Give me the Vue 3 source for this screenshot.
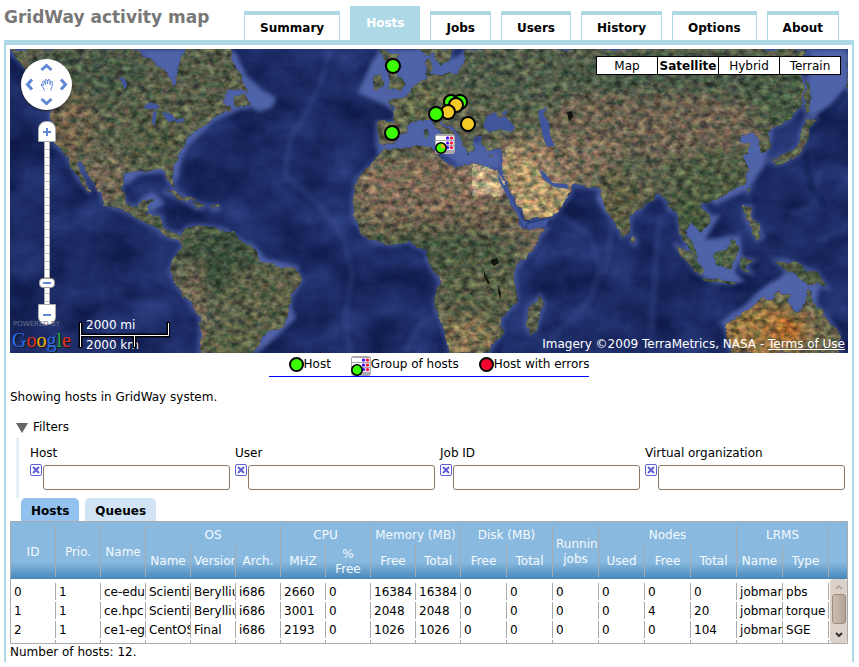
<template>
  <div class="page">
    <header class="header">
      <h1 class="title">GridWay activity map</h1>
      <nav class="tabs">
        <a v-for="tab in tabs" :key="tab" href="#" class="tab" :class="{ active: tab === activeTab }" @click.prevent="activeTab = tab">{{ tab }}</a>
      </nav>
    </header>

    <main class="content">
      <section class="map">
        <svg class="world" viewBox="10 49 838 304" preserveAspectRatio="xMidYMid slice" aria-hidden="true">
          <defs>
            <clipPath id="land">
              <path v-for="(d, i) in land" :key="i" :d="d" />
            </clipPath>
            <filter id="rough" x="0" y="0" width="100%" height="100%" color-interpolation-filters="sRGB">
              <feTurbulence type="fractalNoise" baseFrequency="0.07" numOctaves="5" seed="3" result="coast" />
              <feDisplacementMap in="SourceGraphic" in2="coast" scale="9" xChannelSelector="R" yChannelSelector="G" result="shape" />
              <feTurbulence type="fractalNoise" baseFrequency="0.13 0.17" numOctaves="6" seed="21" />
              <feColorMatrix values="1.4 0.3 0 0 -0.4  1 0.7 0 0 -0.4  0.9 0.5 0.3 0 -0.4  0 0 0 0 1" result="grain" />
              <feComposite in="shape" in2="grain" operator="arithmetic" k1="0.95" k2="0.44" k3="0.04" k4="0" result="mix" />
              <feComposite in="mix" in2="shape" operator="in" />
            </filter>
            <filter id="waves" x="0" y="0" width="100%" height="100%" color-interpolation-filters="sRGB">
              <feTurbulence type="fractalNoise" baseFrequency="0.022 0.03" numOctaves="6" seed="12" />
              <feColorMatrix values="0.5 0 0 0 -0.13  0.6 0 0 0 -0.12  0.9 0 0 0 -0.04  0 0 0 0 1" />
            </filter>
            <filter id="soft"><feGaussianBlur stdDeviation="7" /></filter>
            <filter id="softer"><feGaussianBlur stdDeviation="2" /></filter>
            <symbol id="host-group" viewBox="0 0 20 20">
              <rect width="20" height="20" rx="3" fill="#aaa8aa" />
              <path d="M1 2h18v4H1zM1 7h18v4H1zM1 12h18v3H1z" fill="#fff" />
              <path d="M11 2h8v4h-8zM11 7h8v4h-8zM11 12h8v4h-8z" fill="#e8dce8" />
              <g fill="#4a0cff"><circle cx="12.5" cy="4" r="1.6" /><circle cx="12.5" cy="9" r="1.6" /><circle cx="12.5" cy="13.5" r="1.6" /></g>
              <g fill="#f5123c"><circle cx="16.5" cy="4" r="1.6" /><circle cx="16.5" cy="9" r="1.6" /><circle cx="16.5" cy="13.5" r="1.6" /></g>
              <circle cx="6" cy="14" r="5.2" fill="#3bff00" stroke="#000" stroke-width="1.6" />
            </symbol>
          </defs>

          <rect x="10" y="49" width="838" height="304" fill="#1b2a63" />
          <rect x="10" y="49" width="838" height="304" filter="url(#waves)" opacity="0.35" />
          <g filter="url(#softer)">
            <path v-for="(d, i) in shelf" :key="i" :d="d" fill="#5063a9" />
            <path v-for="(d, i) in land" :key="'s' + i" :d="d" fill="#4c5fa3" stroke="#4c5fa3" stroke-width="4" opacity="0.75" />
          </g>
          <g fill="none" stroke="#4b60a4" stroke-width="5" opacity="0.25" filter="url(#softer)">
            <path d="M330 49L322 80L305 115L290 140L285 175L320 205L345 240L352 275L345 320L350 353" />
            <path d="M560 215L590 235L600 270L590 300L560 330L540 353M660 215L655 270L650 353M607 200L612 230L604 275" />
            <path d="M405 353L420 325L440 310M818 240L848 228M790 215L815 205L820 170" />
          </g>
          <path d="M848 90L830 112L810 128L805 150L810 185L825 205M680 256L697 278L720 286L755 289L780 275" fill="none" stroke="#0b153f" stroke-width="2" filter="url(#softer)" />
          <g filter="url(#rough)">
            <g clip-path="url(#land)">
              <rect x="10" y="49" width="838" height="304" fill="#626850" />
              <g filter="url(#soft)">
                <ellipse v-for="(t, i) in terrain" :key="i" :cx="t[0]" :cy="t[1]" :rx="t[2]" :ry="t[3]" :fill="t[4]" />
              </g>
              <path d="M473 165L500 168L505 196L472 195Z" fill="#cdb58e" />
              <path d="M506 150L530 158L552 180L568 187L570 200L553 216L530 220L517 202L504 172Z" fill="#bda373" />
            </g>
          </g>
          <path v-for="(d, i) in lakes" :key="'l' + i" :d="d" fill="#40559b" />
          <g fill="#11150f">
            <path d="M491 260l6-2 2 5-5 3-3-3zM484 270l2 6 4 7-2 1-4-8zM498 285l3 8-1 6-2-8zM567 112l5-1 1 6-4 4z" />
          </g>

          <g stroke="#000" stroke-width="2">
            <circle v-for="(pin, i) in pins" :key="i" :cx="pin.x" :cy="pin.y" r="7" :fill="pin.ok ? '#3bff00' : '#f3cb26'" />
          </g>
          <use href="#host-group" x="435" y="134" width="20" height="20" />
          <path d="M441 148V144A4 4 0 0 1 445 148Z" fill="#f5b52a" />
        </svg>

        <div class="controls">
          <div class="pan">
            <button class="up" aria-label="Pan up"><svg viewBox="0 0 13 9"><path d="M1.5 7L6.5 2.5L11.5 7" /></svg></button>
            <button class="left" aria-label="Pan left"><svg viewBox="0 0 13 9"><path d="M1.5 7L6.5 2.5L11.5 7" /></svg></button>
            <button class="center" aria-label="Reset view">
              <svg class="hand" viewBox="0 0 14 14"><path d="M4.500 12.500L3 9.500Q1 7.500 1 6.500Q2 6 3.500 7.500L2.500 3.500Q3.500 2.500 4.500 3.500L5.500 6.500L5 2Q6 1 7 2L7.500 6L8 2Q9 1 10 2L10 6.500L11 3.500Q12.500 3 12.500 4.500L12 8.500L10.500 12.500" /></svg>
            </button>
            <button class="right" aria-label="Pan right"><svg viewBox="0 0 13 9"><path d="M1.5 7L6.5 2.5L11.5 7" /></svg></button>
            <button class="down" aria-label="Pan down"><svg viewBox="0 0 13 9"><path d="M1.5 7L6.5 2.5L11.5 7" /></svg></button>
          </div>
          <button class="zoom zoom-in" aria-label="Zoom in"><svg viewBox="0 0 8 8"><path d="M0 4H8M4 0V8" /></svg></button>
          <input v-model="zoom" class="slider" type="range" min="0" max="19" aria-label="Zoom level" />
          <button class="zoom zoom-out" aria-label="Zoom out"><svg viewBox="0 0 8 8"><path d="M0 4H8" /></svg></button>
        </div>

        <div class="map-types">
          <button v-for="type in mapTypes" :key="type" :class="{ selected: type === mapType }" @click="mapType = type">{{ type }}</button>
        </div>

        <div class="brand">
          <div class="powered">POWERED BY</div>
          <div class="google">
            <span class="blue">G</span><span class="red">o</span><span class="yellow">o</span><span class="blue">g</span><span class="green">l</span><span class="red">e</span>
          </div>
        </div>

        <div class="scale">
          <span>2000 mi</span>
          <span>2000 km</span>
          <svg viewBox="0 0 92 27" aria-hidden="true">
            <path d="M2.500 0V26M2.500 13.500H90.500V0M56.500 13.500V26" fill="none" stroke="#000" stroke-width="4" />
            <path d="M2.500 1V25M2.500 13.500H90.500V1M56.500 13.500V25" fill="none" stroke="#fff" stroke-width="1" />
          </svg>
        </div>

        <div class="copyright">Imagery ©2009 TerraMetrics, NASA - <a href="#">Terms of Use</a></div>
      </section>

      <div class="legend">
        <span class="legend-item"><i class="dot green-dot"></i>Host</span>
        <span class="legend-item"><svg class="group-icon" aria-hidden="true"><use href="#host-group" /></svg>Group of hosts</span>
        <span class="legend-item"><i class="dot red-dot"></i>Host with errors</span>
      </div>

      <p class="showing">Showing hosts in GridWay system.</p>

      <button class="filters-toggle" @click="showFilters = !showFilters"><i class="triangle"></i>Filters</button>
      <form v-show="showFilters" class="filters" @submit.prevent>
        <div v-for="filter in filters" :key="filter.id" class="filter">
          <label :for="filter.id">{{ filter.label }}</label>
          <div class="filter-row">
            <button type="button" class="clear" :aria-label="'Clear ' + filter.label" @click="filter.value = ''">
              <svg viewBox="0 0 12 12"><rect x="0.5" y="0.5" width="11" height="11" rx="1.5" /><path d="M3 3L9 9M9 3L3 9" /></svg>
            </button>
            <input :id="filter.id" v-model="filter.value" type="text" />
          </div>
        </div>
      </form>

      <div class="subtabs">
        <button v-for="tab in ['Hosts', 'Queues']" :key="tab" :class="{ current: tab === subtab }" @click="subtab = tab">{{ tab }}</button>
      </div>

      <div class="grid">
        <table>
          <colgroup>
            <col v-for="n in 10" :key="n" class="narrow" />
            <col v-for="n in 8" :key="n + 10" class="wide" />
            <col class="rest" />
          </colgroup>
          <thead>
            <tr class="groups">
              <th rowspan="2">ID</th>
              <th rowspan="2">Prio.</th>
              <th rowspan="2">Name</th>
              <th colspan="3">OS</th>
              <th colspan="2">CPU</th>
              <th colspan="2">Memory (MB)</th>
              <th colspan="2">Disk (MB)</th>
              <th rowspan="2">Running jobs</th>
              <th colspan="3">Nodes</th>
              <th colspan="2">LRMS</th>
              <td rowspan="2" class="blank"></td>
            </tr>
            <tr class="columns">
              <th v-for="(name, i) in columns" :key="i">{{ name }}</th>
            </tr>
          </thead>
          <tbody>
            <tr class="spacer"><td colspan="19"></td></tr>
            <tr v-for="(host, i) in hosts" :key="i">
              <td v-for="(cell, j) in host" :key="j">{{ cell }}</td>
            </tr>
            <tr>
              <td v-for="n in 18" :key="n"></td>
            </tr>
          </tbody>
        </table>
        <div class="scrollbar">
          <svg class="faded" viewBox="0 0 8 5"><path d="M1 4L4 1L7 4" /></svg>
          <div class="thumb"></div>
          <svg viewBox="0 0 8 5"><path d="M1 1L4 4L7 1" /></svg>
        </div>
      </div>
      <p class="count">Number of hosts: 12.</p>
    </main>
  </div>
</template>

<script setup>
import { ref } from 'vue'

const tabs = ['Summary', 'Hosts', 'Jobs', 'Users', 'History', 'Options', 'About']
const activeTab = ref('Hosts')

const mapTypes = ['Map', 'Satellite', 'Hybrid', 'Terrain']
const mapType = ref('Satellite')
const zoom = ref(2)

const showFilters = ref(true)
const filters = ref([
  { id: 'filter-host', label: 'Host', value: '' },
  { id: 'filter-user', label: 'User', value: '' },
  { id: 'filter-job', label: 'Job ID', value: '' },
  { id: 'filter-vo', label: 'Virtual organization', value: '' }
])

const subtab = ref('Hosts')
const columns = ['Name', 'Version', 'Arch.', 'MHZ', '% Free', 'Free', 'Total', 'Free', 'Total', 'Used', 'Free', 'Total', 'Name', 'Type']
const hosts = [
  [0, 1, 'ce-edu', 'Scientif', 'Berylliu', 'i686', 2660, 0, 16384, 16384, 0, 0, 0, 0, 0, 0, 'jobman', 'pbs'],
  [1, 1, 'ce.hpc', 'Scientif', 'Berylliu', 'i686', 3001, 0, 2048, 2048, 0, 0, 0, 0, 4, 20, 'jobman', 'torque'],
  [2, 1, 'ce1-eg', 'CentOS', 'Final', 'i686', 2193, 0, 1026, 1026, 0, 0, 0, 0, 0, 104, 'jobman', 'SGE']
]

const pins = [
  { x: 393, y: 66, ok: true },
  { x: 392, y: 133, ok: true },
  { x: 451, y: 102, ok: true },
  { x: 460, y: 102, ok: true },
  { x: 456, y: 105, ok: false },
  { x: 448, y: 112, ok: false },
  { x: 436, y: 114, ok: true },
  { x: 468, y: 124, ok: false }
]

const land = [
  // North and Central America
  'M0 40L10 52L17 58L30 72L42 92L50 108L50 128L55 145L68 157L72 168L80 182L89 192L90 190L83 177L76 163L80 162L90 178L100 192L103 202L113 208L128 213L143 222L157 228L163 235L173 239L184 241L180 234L167 231L163 227L162 216L147 214L148 204L155 199L143 200L137 206L127 204L121 190L127 174L140 171L157 169L165 172L170 184L175 186L173 172L172 163L183 152L187 138L200 128L213 117L224 111L233 110L230 105L220 102L228 93L240 88L247 90L243 80L233 67L227 40L183 40L184 52L180 62L177 77L174 88L168 73L157 65L143 57L137 40Z',
  'M236 98L242 92L250 103L248 108L235 106Z',
  'M163 192L175 190L186 197L197 202L186 202L176 196ZM190 204L198 203L207 206L197 209ZM212 206l7 1-1 3-6-1z',
  // South America
  'M180 236L187 227L200 225L215 227L227 230L240 240L253 247L260 260L272 263L285 267L296 270L302 280L292 297L288 317L283 326L267 331L260 341L253 360L200 360L200 317L187 300L177 287L170 272L173 260L182 247Z',
  // Africa
  'M357 178L353 198L353 217L363 233L375 243L392 245L408 242L418 247L428 250L427 260L432 270L440 282L435 303L437 313L443 327L448 343L450 360L485 360L497 340L502 332L502 317L517 303L515 280L515 270L532 250L547 228L528 230L523 227L515 210L507 196L497 170L485 166L462 162L455 167L445 162L435 155L432 146L418 147L398 148L384 149L372 165Z',
  'M540 295L544 303L536 330L530 334L526 323L528 310Z',
  // Europe and Asia
  'M377 122L397 122L395 108L389 102L407 95L418 81L427 76L425 62L432 58L432 73L442 76L458 72L463 65L465 53L467 40L810 40L803 62L803 85L803 102L787 122L772 128L770 148L762 155L760 142L752 134L743 134L740 143L751 143L743 155L748 168L743 185L730 193L717 200L703 200L703 205L713 220L700 233L690 223L685 231L694 245L698 260L690 253L680 232L677 212L668 210L667 203L660 193L650 200L630 217L630 232L622 237L610 212L603 198L597 188L572 185L568 198L553 217L529 220L517 203L502 178L502 158L502 150L485 152L480 142L482 135L472 135L475 152L470 154L462 142L452 128L442 118L442 124L455 136L448 143L435 128L430 120L418 120L408 126L402 135L395 142L385 145L377 145Z',
  'M418 40L418 50L428 56L435 53L438 66L446 62L453 49L453 40Z',
  // Britain, Ireland and the Mediterranean islands
  'M381 50L398 54L396 68L405 84L402 91L388 92L392 82L386 70ZM373 77L384 75L384 87L374 89ZM424 130l4-1 1 9-4 1zM439 142l8 1-1 4-6-2zM489 156l6-1-2 3z',
  'M633 236l4 4-2 5-4-3z',
  // South-east Asia
  'M674 243L687 250L704 270L702 276L695 272L685 260ZM703 277L720 278L735 281L733 284L712 281ZM713 255L723 251L733 240L738 248L734 262L731 270L716 267ZM742 258L754 260L746 264L751 273L742 270ZM744 206L751 206L751 219L758 225L763 237L757 241L752 231L745 219Z',
  'M775 260L785 260L797 264L817 273L828 288L814 284L803 281L790 274ZM746 187l4-1-2 7z',
  // Japan and Sakhalin
  'M770 160L785 154L798 148L801 132L803 128L806 117L817 120L808 127L806 145L800 154L777 165ZM806 78L811 98L810 113L806 112L804 95Z',
  'M845 66L848 60L850 95L846 88Z',
  // Australia
  'M725 323L737 315L750 310L760 298L773 300L778 291L791 295L788 304L800 312L807 288L812 300L820 309L828 319L838 333L838 360L734 360L730 345Z'
]

const shelf = [
  'M137 49L184 49L180 65L175 90L165 73Z',
  'M227 49L236 53L246 75L262 90L276 98L272 108L258 112L250 106L215 120L200 135L189 145L181 160L178 180L166 172L140 175L126 185L122 170L170 160Z',
  'M138 201L152 192L158 197L165 203L152 212Z',
  'M358 93L370 65L380 49L425 49L445 62L470 49L466 75L420 95L398 115L385 105Z',
  'M376 153L392 120L440 118L458 135L500 152L500 168L460 165L435 150L380 152Z',
  'M810 49L848 49L848 85L830 105L812 118L806 105Z',
  'M738 128L772 130L765 165L748 190L715 205L705 195L735 170Z',
  'M680 215L720 215L705 240L740 235L742 255L735 272L745 282L715 286L700 276L690 250Z',
  'M745 305L765 285L790 270L820 285L815 310L800 315L780 300L755 315L730 335L720 322Z',
  'M540 170L552 180L566 183L570 190L552 187ZM600 190L612 215L606 215L596 198ZM250 240L265 258L300 267L294 275L260 270ZM288 300L296 318L262 350L252 353Z'
]

const lakes = [
  'M483 126L487 116L496 112L498 118L505 116L515 127L512 132L500 129L489 132ZM501 114l7-5-2 6z',
  'M538 111L548 107L543 114L549 123L550 135L555 146L547 147L544 140L541 128Z',
  'M143 107L150 102L160 106L157 109L147 109ZM153 112L157 110L155 126L152 122ZM162 112L172 114L176 120L168 122ZM175 120l9-2 1 3-9 2z',
  'M497 172L501 180L512 200L523 220L528 222L524 227L513 207L499 181ZM526 224L549 219L546 226L529 230Z',
  'M539 169L545 173L553 183L567 184L569 189L554 187L543 179Z',
  'M120 77l4 1 3 6-2 6-3-7z'
]

// [cx, cy, rx, ry, colour]
const terrain = [
  [90, 75, 60, 30, '#505f48'],
  [70, 125, 24, 35, '#77694f'],
  [105, 180, 22, 24, '#7c705a'],
  [155, 135, 32, 38, '#5b6549'],
  [205, 75, 35, 30, '#5d654e'],
  [220, 260, 42, 35, '#42573f'],
  [265, 295, 38, 32, '#62674b'],
  [193, 315, 9, 55, '#87765e'],
  [235, 345, 38, 18, '#616949'],
  [430, 190, 80, 34, '#89755d'],
  [455, 223, 95, 13, '#786b53'],
  [440, 250, 70, 22, '#505f45'],
  [480, 290, 40, 28, '#5e664a'],
  [468, 338, 30, 20, '#8e7d57'],
  [535, 235, 14, 22, '#83705c'],
  [415, 105, 45, 20, '#69714f'],
  [390, 133, 15, 12, '#7e7557'],
  [520, 75, 80, 32, '#58654f'],
  [540, 165, 55, 30, '#9c8767'],
  [585, 150, 35, 25, '#85765d'],
  [600, 115, 50, 22, '#746b55'],
  [680, 75, 120, 25, '#50604b'],
  [680, 125, 80, 32, '#766b56'],
  [615, 200, 20, 30, '#676647'],
  [710, 180, 40, 30, '#566546'],
  [690, 215, 20, 22, '#4b5e3f'],
  [780, 95, 28, 35, '#4f634a'],
  [725, 255, 40, 32, '#53684a'],
  [805, 275, 25, 12, '#516345'],
  [765, 332, 45, 28, '#a98045'],
  [788, 330, 14, 14, '#ba6d2c'],
  [820, 330, 14, 30, '#777050']
]
</script>

<style>
body {
  margin: 0;
  background: #fff;
}
</style>

<style scoped>
.page {
  padding: 6px 5px 6px 4px;
  font: 12px/15px "DejaVu Sans", sans-serif;
  color: #000;
}

button,
input {
  font: inherit;
  color: inherit;
  margin: 0;
  padding: 0;
  box-sizing: border-box;
}

button {
  border: 0;
  background: none;
  cursor: pointer;
}

.header {
  display: flex;
  justify-content: space-between;
  align-items: flex-start;
  height: 34px;
  padding-right: 15px;
}

.title {
  margin: 1px 0 0;
  font-size: 17px;
  line-height: 20px;
  color: #777;
}

.tabs {
  display: flex;
  align-items: flex-end;
  gap: 10px;
  height: 34px;
}

.tab {
  box-sizing: border-box;
  height: 29px;
  padding: 6px 15px 0;
  border: 1px solid #add8e6;
  border-top-width: 4px;
  border-bottom: 0;
  font-weight: bold;
  color: #000;
  text-decoration: none;
}

.tab.active {
  height: 34px;
  background: #add8e6;
  color: #fff;
}

.content {
  padding: 4px 4px 2px;
  border: 2px solid #add8e6;
  border-top-width: 5px;
  border-bottom: 0;
}

.map {
  position: relative;
  height: 304px;
  overflow: hidden;
  background: #1c2a63;
}

.world {
  display: block;
  width: 100%;
  height: 100%;
}

.controls {
  position: absolute;
  top: 10px;
  left: 11px;
  display: flex;
  flex-direction: column;
  align-items: center;
}

.pan {
  display: grid;
  grid-template-columns: repeat(3, 17px);
  grid-template-rows: repeat(3, 17px);
  margin-bottom: 11px;
  border-radius: 50%;
  background: #fff;
  box-shadow: 0 1px 2px #222;
}

.pan button {
  display: flex;
  align-items: center;
  justify-content: center;
}

.pan svg {
  width: 13px;
  height: 9px;
  fill: none;
  stroke: #5f87d6;
  stroke-width: 3;
}

.pan .up {
  grid-area: 1 / 2;
}

.pan .left {
  grid-area: 2 / 1;
}

.pan .center {
  grid-area: 2 / 2;
}

.pan .right {
  grid-area: 2 / 3;
}

.pan .down {
  grid-area: 3 / 2;
}

.pan .left svg {
  transform: rotate(-90deg);
}

.pan .right svg {
  transform: rotate(90deg);
}

.pan .down svg {
  transform: rotate(180deg);
}

.pan .hand {
  flex: none;
  width: 14px;
  height: 14px;
  stroke-width: 1;
}

.zoom {
  display: flex;
  align-items: center;
  justify-content: center;
  width: 18px;
  height: 21px;
  border: 1px solid #aaa;
  background: #fff;
}

.zoom-in {
  border-radius: 8px 8px 0 0;
}

.zoom-out {
  border-radius: 0 0 8px 8px;
}

.zoom svg {
  width: 8px;
  height: 8px;
  stroke: #5f87d6;
  stroke-width: 2;
}

.slider {
  appearance: none;
  writing-mode: vertical-lr;
  direction: rtl;
  width: 16px;
  height: 162px;
  background: none;
}

.slider::-webkit-slider-runnable-track {
  box-sizing: border-box;
  width: 6px;
  height: 100%;
  border: 1px solid #aaa;
  border-width: 0 1px;
  background: repeating-linear-gradient(#fff 0 7px, #bbb 7px 8px);
}

.slider::-webkit-slider-thumb {
  appearance: none;
  box-sizing: border-box;
  width: 16px;
  height: 10px;
  margin-left: -6px;
  border: 1px solid #999;
  border-radius: 4px;
  background: linear-gradient(#5f87d6, #5f87d6) center / 8px 2px no-repeat #fff;
}

.map-types {
  position: absolute;
  top: 7px;
  right: 7px;
  display: flex;
  border: 1px solid #000;
  background: #000;
  gap: 1px;
}

.map-types button {
  width: 60px;
  height: 17px;
  padding-top: 1px;
  background: #fff;
}

.map-types .selected {
  font-weight: bold;
}

.brand {
  position: absolute;
  left: 2px;
  bottom: 1px;
}

.powered {
  padding-left: 1px;
  font-size: 7px;
  line-height: 8px;
  color: #69708a;
}

.google {
  font: 20px/24px "Liberation Serif", serif;
  text-shadow: 1px 1px 1px #111;
}

.blue {
  color: #2c6be8;
}

.red {
  color: #e8301c;
}

.yellow {
  color: #f0b80c;
}

.green {
  color: #22a83c;
}

.scale {
  position: absolute;
  left: 68px;
  bottom: 0;
  display: flex;
  flex-direction: column;
  gap: 5px;
  width: 92px;
  padding-left: 8px;
  color: #fff;
}

.scale svg {
  position: absolute;
  left: 0;
  bottom: 4px;
  width: 92px;
  height: 27px;
}

.copyright {
  position: absolute;
  right: 3px;
  bottom: 1px;
  color: #fff;
}

.copyright a {
  color: #fff;
}

.legend {
  display: flex;
  width: fit-content;
  height: 20px;
  margin: 3px auto 0;
  border-bottom: 1px solid #00f;
}

.legend-item {
  display: flex;
  align-items: center;
  height: 16px;
  margin-left: 20px;
}

.dot {
  box-sizing: border-box;
  width: 15px;
  height: 15px;
  border: 2px solid #000;
  border-radius: 50%;
}

.green-dot {
  background: #3bff00;
}

.red-dot {
  background: #f0052c;
}

.group-icon {
  align-self: flex-start;
  width: 20px;
  height: 20px;
}

.showing {
  margin: 13px 0 15px;
}

.filters-toggle {
  display: flex;
  align-items: center;
  gap: 5px;
  margin-left: 6px;
  height: 15px;
}

.triangle {
  border: 5px solid transparent;
  border-width: 10px 6px 0;
  border-top-color: #666;
}

.filters {
  display: grid;
  grid-template-columns: repeat(4, 1fr);
  gap: 5px;
  height: 60px;
  margin: 3px 3px 0 6px;
  padding: 8px 0 0 11px;
  border-left: 3px solid #e6eef8;
  box-sizing: border-box;
}

.filter label {
  display: block;
  height: 18px;
}

.filter-row {
  display: flex;
  align-items: flex-start;
  gap: 1px;
}

.filter-row input {
  flex: 1;
  min-width: 0;
  height: 25px;
  margin-top: 1px;
  padding: 0 4px;
  border: 1px solid #8a7867;
  border-radius: 3px;
  background: #fff;
}

.clear,
.clear svg {
  display: block;
  width: 12px;
  height: 12px;
}

.clear svg {
  fill: #fff;
  stroke: #5f5fd7;
}

.clear path {
  stroke-width: 2;
}

.subtabs {
  display: flex;
  gap: 6px;
  margin-left: 11px;
}

.subtabs button {
  height: 23px;
  padding: 4px 10px 0;
  border-radius: 5px 5px 0 0;
  background: #d0e4f6;
  font-weight: bold;
}

.subtabs .current {
  background: #93c1f0;
}

.grid {
  position: relative;
  height: 121px;
  overflow: hidden;
  border: 1px solid #aaa;
  background: linear-gradient(#89b9de 0 70%, #4687bb) top / 100% 57px no-repeat #fff;
}

table {
  width: 100%;
  margin-top: 2px;
  table-layout: fixed;
  border-collapse: separate;
  border-spacing: 0 2px;
}

.narrow {
  width: 45px;
}

.wide {
  width: 46px;
}

.rest {
  width: 18px;
}

th,
td {
  height: 17px;
  padding: 1px 0 0 3px;
  overflow: hidden;
  border-right: 1px solid #aaa;
  box-sizing: border-box;
}

th {
  padding-right: 3px;
  font-weight: normal;
  color: #f4faff;
}

td {
  line-height: 16px;
  white-space: nowrap;
}

.columns th {
  height: 32px;
}

.spacer td {
  height: 2px;
  padding: 0;
  line-height: 2px;
  border: 0;
}

.blank {
  border: 0;
}

.scrollbar {
  position: absolute;
  right: 0;
  bottom: 0;
  display: flex;
  flex-direction: column;
  align-items: center;
  justify-content: space-between;
  box-sizing: border-box;
  width: 17px;
  height: 64px;
  padding: 6px 0;
  border-radius: 3px;
  background: #dcd2ca;
}

.scrollbar svg {
  width: 8px;
  height: 5px;
  fill: none;
  stroke: #333;
  stroke-width: 2;
}

.scrollbar .faded {
  stroke: #b5aaa0;
}

.thumb {
  box-sizing: border-box;
  width: 14px;
  height: 30px;
  margin-bottom: 4px;
  border: 1px solid #9c8c7e;
  border-radius: 3px;
  background: linear-gradient(90deg, #cabbb0, #b5a498);
}

.count {
  margin: 0;
  padding-top: 1px;
}
</style>
